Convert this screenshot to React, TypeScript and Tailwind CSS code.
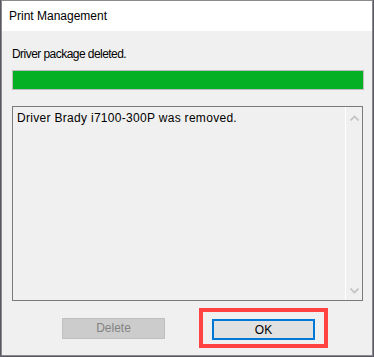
// Print Management – "driver package deleted" dialog
export default function App() {
  return (
    <div
      className="h-[357px] w-[374px] bg-[#5b5866] pl-px"
      style={{ fontFamily: '"Liberation Sans", Arial, sans-serif' }}
    >
      <div className="flex h-[356px] w-[372px] flex-col border border-[#8a8a8a] bg-[#f0f0f0]">
        {/* Title bar */}
        <div className="flex h-[30px] items-center bg-white pl-[7px] text-[12px] text-black">
          Print Management
        </div>

        {/* Body */}
        <div className="flex flex-1 flex-col pl-[10px] pt-[15px]">
          <p className="h-[16px] text-[12px] leading-[16px] tracking-[-0.55px] text-black">
            Driver package deleted.
          </p>

          {/* Progress bar */}
          <div className="mt-[8px] h-[20px] w-[352px] border border-[#bcbcbc] bg-[#e6e6e6]">
            <div className="h-full w-full bg-[#06b025]" />
          </div>

          {/* Log box */}
          <div className="mt-[16px] flex h-[195px] w-[351px] border border-[#7a7a7a] bg-[#f0f0f0]">
            <div className="flex-1 pl-[4px] pt-[3px] text-[12px] leading-[16px] tracking-[0.3px] text-black">
              Driver Brady i7100-300P was removed.
            </div>
            <div className="flex w-[17px] flex-col items-center justify-between border-l border-white pb-[6px] pt-[8px] text-[#c2c2c2]">
              <svg width="9" height="6" viewBox="0 0 9 6">
                <path d="M0.5 5.5 L4.5 1.5 L8.5 5.5" fill="none" stroke="currentColor" strokeWidth="1.6" />
              </svg>
              <svg width="9" height="6" viewBox="0 0 9 6">
                <path d="M0.5 0.5 L4.5 4.5 L8.5 0.5" fill="none" stroke="currentColor" strokeWidth="1.6" />
              </svg>
            </div>
          </div>

          {/* Buttons */}
          <div className="mt-[7px] flex items-center">
            <button
              type="button"
              disabled
              className="ml-[50px] h-[21px] w-[103px] border border-[#bfbfbf] bg-[#cccccc] text-[12px] text-[#838383]"
            >
              Delete
            </button>
            <div className="ml-[34px] flex h-[40px] w-[129px] items-start justify-center border-[4px] border-[#ff4343] pt-[7px]">
              <button
                type="button"
                className="h-[21px] w-[103px] border-2 border-[#0078d7] bg-[#e1e1e1] text-[12px] text-black"
              >
                OK
              </button>
            </div>
          </div>
        </div>
      </div>
    </div>
  );
}
